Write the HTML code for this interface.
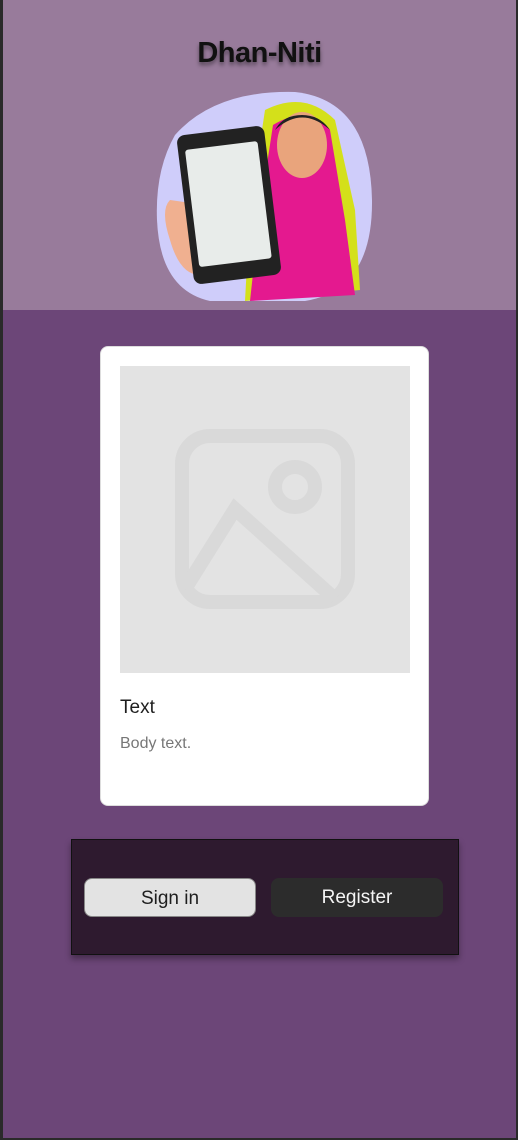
<!DOCTYPE html>
<html><head><style>
*{margin:0;padding:0;box-sizing:border-box}
body{width:518px;height:1140px;background:#2a2a2a;position:relative;overflow:hidden;font-family:"Liberation Sans",sans-serif}
#main{position:absolute;left:3px;top:0;width:513px;height:1138px;background:#6c4678}
#hdr{position:absolute;left:0;top:0;width:513px;height:310px;background:#987b9b}
h1{position:absolute;top:37px;left:0;width:513px;text-align:center;font-size:29px;font-weight:bold;color:#111;text-shadow:0 3px 4px rgba(0,0,0,.45);letter-spacing:-0.5px}
.card{position:absolute;left:97px;top:346px;width:329px;height:460px;background:#fff;border-radius:8px;border:1px solid #ddd}
.ph{position:absolute;left:19px;top:19px;width:290px;height:307px;background:#e3e3e3}
.t1{position:absolute;left:19px;top:350px;font-size:19px;color:#1e1e1e}
.t2{position:absolute;left:19px;top:388px;font-size:16px;color:#777}
.bar{position:absolute;left:68px;top:839px;width:388px;height:116px;background:#2e1a2f;border:1px solid #111;box-shadow:0 4px 6px rgba(0,0,0,.35)}
.b{position:absolute;top:38px;width:172px;height:39px;border-radius:8px;font-size:19px;text-align:center;line-height:40px}
.b1{left:12px;background:#e3e3e3;color:#1e1e1e;border:1px solid #888}
.b2{left:199px;background:#2c2c2c;color:#f5f5f5}
</style></head><body>
<div id="main">
<div id="hdr">
<h1>Dhan-Niti</h1>
<svg style="position:absolute;left:152px;top:90px" width="218" height="212" viewBox="0 0 218 212">
<path d="M20 45 Q60 0 140 2 Q215 10 217 110 Q218 200 150 211 L55 211 Q5 200 2 130 Q0 80 20 45Z" fill="#cfcdfa"/>
<path d="M110 20 Q150 0 180 30 L200 120 L205 200 L90 211 L95 120Z" fill="#d4e01a"/>
<path d="M118 35 Q150 15 175 40 L190 130 L200 205 L95 211 L105 120Z" fill="#e4198f"/>
<ellipse cx="147" cy="55" rx="25" ry="33" fill="#e9a47c"/>
<path d="M120 40 Q147 15 175 40 Q165 25 147 25 Q128 25 120 40Z" fill="#222"/>
<path d="M15 110 Q5 120 15 150 Q25 185 45 185 L50 115Z" fill="#f0b090"/>
<rect x="30" y="40" width="88" height="150" rx="8" transform="rotate(-7 74 115)" fill="#222"/>
<rect x="37" y="55" width="73" height="118" rx="3" transform="rotate(-7 74 115)" fill="#e8ecea"/>
</svg>
</div>
<div class="card"><div class="ph">
<svg style="position:absolute;left:55px;top:63px" width="180" height="180" viewBox="0 0 180 180" fill="none" stroke="#d9d9d9" stroke-width="14"><rect x="7" y="7" width="166" height="166" rx="28"/><circle cx="120" cy="58" r="20"/><path d="M10 160 L60 80 L160 170"/></svg>
</div><div class="t1">Text</div><div class="t2">Body text.</div></div>
<div class="bar"><div class="b b1">Sign in</div><div class="b b2">Register</div></div>
</div>
</body></html>
